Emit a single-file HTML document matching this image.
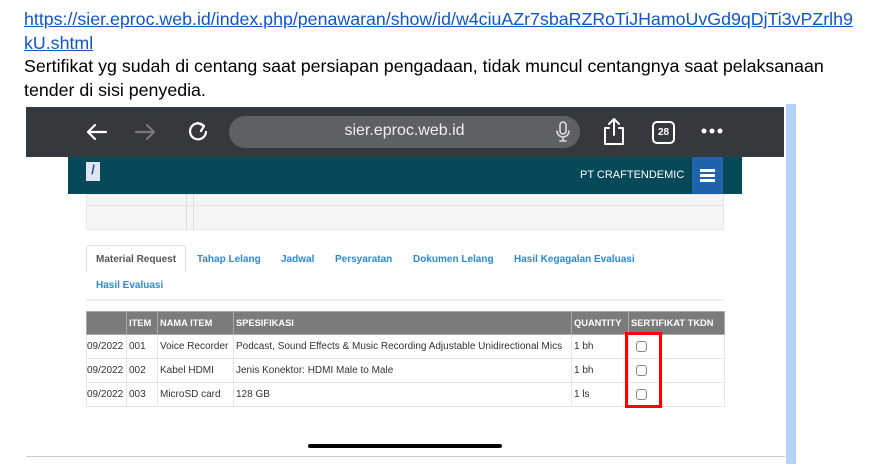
<!DOCTYPE html>
<html><head><style>
body{margin:0;width:876px;height:467px;background:#fff;position:relative;overflow:hidden;font-family:"Liberation Sans",Arial,sans-serif}
.a{position:absolute}
.t{font-size:17.8px;color:#000;left:24px;line-height:23.5px}
.lnk{color:#1155cc;text-decoration:underline}
.tab{position:absolute;top:254px;font-size:10px;font-weight:bold;color:#2a8ad6}
table{position:absolute;left:86px;top:311px;border-collapse:collapse;font-size:10px;color:#333;table-layout:fixed;width:638px}
td,th{border:1px solid #e6e6e6;padding:0 2px;height:23px;white-space:nowrap;text-align:left;overflow:hidden;box-sizing:border-box}
th{background:#7b7b7b;color:#fff;font-size:9.3px;border-color:#aaa}
.cb{display:inline-block;width:9px;height:9px;border:1px solid #888;border-radius:3px;margin-left:5px;vertical-align:middle}
</style></head><body>
<div class="a t" style="top:8px"><span class="lnk">https://sier.eproc.web.id/index.php/penawaran/show/id/w4ciuAZr7sbaRZRoTiJHamoUvGd9qDjTi3vPZrlh9<br>kU.shtml</span><br>Sertifikat yg sudah di centang saat persiapan pengadaan, tidak muncul centangnya saat pelaksanaan<br>tender di sisi penyedia.</div>
<div class="a" style="left:786px;top:104px;width:10px;height:360px;background:#b8d3fb"></div>
<div class="a" style="left:26px;top:107px;width:758px;height:50px;background:#35383c"></div>
<svg class="a" style="left:80px;top:118px" width="160" height="28" viewBox="0 0 160 28" fill="none" stroke-width="2.2" stroke-linecap="round" stroke-linejoin="round">
<path d="M8 14h18M15 7l-7 7 7 7" stroke="#fff"/>
<path d="M56 14h18M67 7l7 7-7 7" stroke="#777"/>
<path d="M124 8a8 8 0 1 0 2 6" stroke="#fff"/><path d="M118 5l6 3-3 5" stroke="#fff"/>
</svg>
<div class="a" style="left:229px;top:116px;width:351px;height:32px;border-radius:16px;background:#5d6166"></div>
<div class="a" style="left:229px;top:122px;width:351px;text-align:center;color:#eee;font-size:16px">sier.eproc.web.id</div>
<svg class="a" style="left:555px;top:120px" width="16" height="24" viewBox="0 0 16 24" fill="none" stroke="#ddd" stroke-width="1.6" stroke-linecap="round"><rect x="5" y="2" width="6" height="12" rx="3"/><path d="M2 11a6 6 0 0 0 12 0M8 17v4M5 21h6"/></svg>
<svg class="a" style="left:600px;top:116px" width="28" height="32" viewBox="0 0 28 32" fill="none" stroke="#fff" stroke-width="2" stroke-linecap="round" stroke-linejoin="round"><path d="M9 12H5v16h18V12h-4M14 3v16M9 8l5-5 5 5"/></svg>
<div class="a" style="left:652px;top:121px;width:19px;height:19px;border:2px solid #fff;border-radius:5px;color:#fff;font-size:10px;font-weight:bold;text-align:center;line-height:19px">28</div>
<svg class="a" style="left:700px;top:127px" width="24" height="8"><circle cx="4" cy="4" r="2.5" fill="#fff"/><circle cx="12" cy="4" r="2.5" fill="#fff"/><circle cx="20" cy="4" r="2.5" fill="#fff"/></svg>
<div class="a" style="left:68px;top:157px;width:674px;height:37px;background:#064a5a"></div>
<div class="a" style="left:86px;top:162px;width:14px;height:19px;background:#dfe6ee;color:#2b4b9b;font-size:13px;font-weight:bold;text-align:center;line-height:16px">/</div>
<div class="a" style="left:580px;top:169px;color:#fff;font-size:11px">PT CRAFTENDEMIC</div>
<div class="a" style="left:692px;top:157px;width:31px;height:37px;background:#1f63ad"></div>
<div class="a" style="left:700px;top:169px;width:15px;height:3px;background:#fff;box-shadow:0 5px 0 #fff,0 10px 0 #fff"></div>
<div class="a" style="left:86px;top:194px;width:638px;height:36px;background:#f5f5f5;border:1px solid #e8e8e8;box-sizing:border-box"></div>
<div class="a" style="left:86px;top:205px;width:638px;height:1px;background:#e3e3e3"></div>
<div class="a" style="left:186px;top:194px;width:8px;height:36px;border-left:1px solid #ddd;border-right:1px solid #ddd;box-sizing:border-box"></div>
<div class="a" style="left:86px;top:245px;width:100px;height:28px;border:1px solid #ddd;border-bottom:none;border-radius:3px 3px 0 0;box-sizing:border-box"></div>
<div class="tab" style="left:96px;color:#555">Material Request</div>
<div class="tab" style="left:197px">Tahap Lelang</div>
<div class="tab" style="left:281px">Jadwal</div>
<div class="tab" style="left:335px">Persyaratan</div>
<div class="tab" style="left:413px">Dokumen Lelang</div>
<div class="tab" style="left:514px">Hasil Kegagalan Evaluasi</div>
<div class="tab" style="left:96px;top:280px">Hasil Evaluasi</div>
<div class="a" style="left:86px;top:299px;width:638px;height:2px;background:#eee"></div>
<table>
<colgroup><col style="width:40px"><col style="width:31px"><col style="width:76px"><col style="width:338px"><col style="width:57px"><col style="width:96px"></colgroup>
<tr><th></th><th>ITEM</th><th>NAMA ITEM</th><th>SPESIFIKASI</th><th>QUANTITY</th><th>SERTIFIKAT TKDN</th></tr>
<tr style="height:24px"><td style="padding:0">09/2022</td><td>001</td><td>Voice Recorder</td><td>Podcast, Sound Effects &amp; Music Recording Adjustable Unidirectional Mics</td><td>1 bh</td><td><span class="cb"></span></td></tr>
<tr style="height:24px"><td style="padding:0">09/2022</td><td>002</td><td>Kabel HDMI</td><td>Jenis Konektor: HDMI Male to Male</td><td>1 bh</td><td><span class="cb"></span></td></tr>
<tr style="height:24px"><td style="padding:0">09/2022</td><td>003</td><td>MicroSD card</td><td>128 GB</td><td>1 ls</td><td><span class="cb"></span></td></tr>
</table>
<div class="a" style="left:625px;top:332px;width:37px;height:76px;border:3px solid #f00;box-sizing:border-box"></div>
<div class="a" style="left:308px;top:444px;width:194px;height:4px;border-radius:2px;background:#000"></div>
<div class="a" style="left:26px;top:456px;width:759px;height:1px;background:#ccc"></div>
</body></html>
